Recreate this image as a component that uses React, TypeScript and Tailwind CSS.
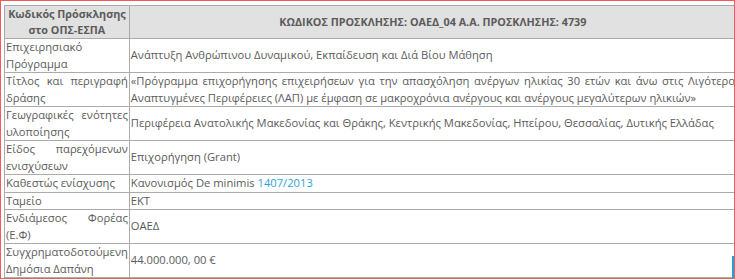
import React from "react";

const rows: { label: string; value: React.ReactNode }[] = [
  {
    label: "Επιχειρησιακό Πρόγραμμα",
    value: "Ανάπτυξη Ανθρώπινου Δυναμικού, Εκπαίδευση και Διά Βίου Μάθηση",
  },
  {
    label: "Τίτλος και περιγραφή δράσης",
    value:
      "«Πρόγραμμα επιχορήγησης επιχειρήσεων για την απασχόληση ανέργων ηλικίας 30 ετών και άνω στις Λιγότερο Αναπτυγμένες Περιφέρειες (ΛΑΠ) με έμφαση σε μακροχρόνια ανέργους και ανέργους μεγαλύτερων ηλικιών»",
  },
  {
    label: "Γεωγραφικές ενότητες υλοποίησης",
    value:
      "Περιφέρεια Ανατολικής Μακεδονίας και Θράκης, Κεντρικής Μακεδονίας, Ηπείρου, Θεσσαλίας, Δυτικής Ελλάδας",
  },
  { label: "Είδος παρεχόμενων ενισχύσεων", value: "Επιχορήγηση (Grant)" },
  {
    label: "Καθεστώς ενίσχυσης",
    value: (
      <>
        Κανονισμός De minimis{" "}
        <a className="text-[#2fa4d9]">1407/2013</a>
      </>
    ),
  },
  { label: "Ταμείο", value: "ΕΚΤ" },
  { label: "Ενδιάμεσος Φορέας (Ε.Φ)", value: "ΟΑΕΔ" },
  {
    label: "Συγχρηματοδοτούμενη Δημόσια Δαπάνη",
    value: "44.000.000, 00 €",
  },
];

const App = () => {
  return (
    <div className="relative h-[279px] w-[735px] overflow-hidden border border-[#f15b5b] bg-white pl-[3px] pt-[4px] font-['Open_Sans',sans-serif] text-[11.2px] text-[#5b5b5b]">
      <table className="w-[732px] border-collapse">
        <thead>
          {/* header */}
          <tr className="h-[32px] bg-[#e1e1e1] text-[10.8px]">
            <th className="w-[117px] border border-[#ababab] px-px text-center leading-[16px] font-bold">
              Κωδικός Πρόσκλησης στο ΟΠΣ-ΕΣΠΑ
            </th>
            <th className="border border-r-0 border-[#ababab] px-px text-center font-bold">
              ΚΩΔΙΚΟΣ ΠΡΟΣΚΛΗΣΗΣ: ΟΑΕΔ_04 Α.Α. ΠΡΟΣΚΛΗΣΗΣ: 4739
            </th>
          </tr>
        </thead>
        <tbody>
          {rows.map((row) => (
            <tr key={row.label}>
              <td className="border border-[#ababab] px-px text-justify align-middle leading-[16.5px]">
                {row.label}
              </td>
              <td className="border border-r-0 border-[#ababab] px-px text-justify align-middle leading-[16.5px]">
                {row.value}
              </td>
            </tr>
          ))}
        </tbody>
      </table>

      {/* scroll thumb */}
      <div className="absolute bottom-0 right-0 h-[22px] w-[2px] bg-[#22a0d2]" />
    </div>
  );
};

export default App;
